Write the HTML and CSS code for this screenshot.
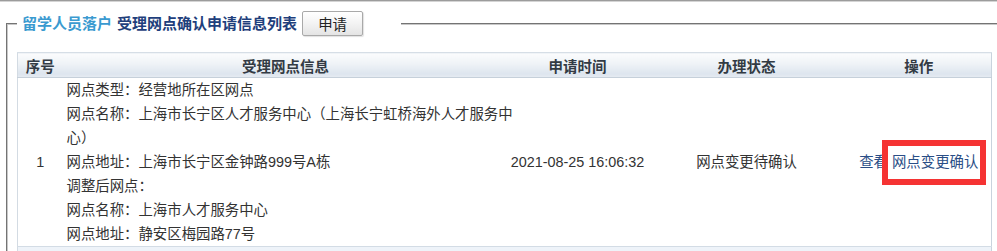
FILE: index.html
```html
<!DOCTYPE html>
<html lang="zh-CN">
<head>
<meta charset="utf-8">
<title>受理网点确认申请信息列表</title>
<link rel="stylesheet" href="styles.css">
</head>
<body>
<div class="topline"></div>
<fieldset class="panel">
  <legend class="panel-title">
    <span class="title-cat">留学人员落户</span>
    <span class="title-main">受理网点确认申请信息列表</span>
    <button class="btn" type="button">申请</button>
  </legend>
  <table class="grid">
    <colgroup>
      <col class="c-no">
      <col class="c-info">
      <col class="c-time">
      <col class="c-state">
      <col class="c-op">
    </colgroup>
    <thead>
      <tr>
        <th>序号</th>
        <th>受理网点信息</th>
        <th>申请时间</th>
        <th>办理状态</th>
        <th>操作</th>
      </tr>
    </thead>
    <tbody>
      <tr class="row">
        <td class="center">1</td>
        <td class="info">
          <div class="line">网点类型：经营地所在区网点</div>
          <div class="line">网点名称：上海市长宁区人才服务中心（上海长宁虹桥海外人才服务中心）</div>
          <div class="line">网点地址：上海市长宁区金钟路999号A栋</div>
          <div class="line">调整后网点：</div>
          <div class="line">网点名称：上海市人才服务中心</div>
          <div class="line">网点地址：静安区梅园路77号</div>
        </td>
        <td class="center">2021-08-25 16:06:32</td>
        <td class="center">网点变更待确认</td>
        <td class="center ops"><a class="link" href="#">查看</a> <a class="link marked" href="#">网点变更确认</a></td>
      </tr>
      <tr class="row-next">
        <td colspan="5"></td>
      </tr>
    </tbody>
  </table>
</fieldset>
</body>
</html>
```

FILE: styles.css
```css
html, body {
  margin: 0;
  padding: 0;
  overflow: hidden;
  background: #fff;
}

body {
  font-family: "Liberation Sans", "Noto Sans CJK SC", sans-serif;
  font-size: 14.4px;
  color: #333;
}

.topline {
  height: 1px;
  background: #9c9c9c;
  border-bottom: 1px solid #d4d4d4;
}

.panel {
  margin: 9px 0 0 6px;
  padding: 16px 0 0 9px;
  width: 1010px;
  box-sizing: border-box;
  border: 2px groove #c8c8c8;
  border-right: none;
}

.panel-title {
  display: flex;
  align-items: center;
  padding: 0 5px;
  font-size: 15px;
  font-weight: bold;
  line-height: 20px;
}

.title-cat {
  color: #3a9ad0;
  margin-right: 5px;
}

.title-main {
  color: #1f3f7c;
}

.btn {
  margin-left: 5px;
  margin-right: 33px;
  width: 61px;
  height: 25px;
  padding: 0;
  font-family: "Liberation Sans", "Noto Sans CJK SC", sans-serif;
  font-size: 14.4px;
  font-weight: normal;
  color: #222;
  border: 1px solid #a9a9a9;
  border-radius: 2px;
  background: linear-gradient(#ffffff, #f3f3f3 50%, #e4e4e4);
  box-shadow: 1px 1px 1px rgba(0, 0, 0, 0.12);
}

.grid {
  width: 974px;
  table-layout: fixed;
  border-collapse: collapse;
  border-left: 1px solid #d3dbe3;
  border-right: 1px solid #c9d3dd;
}

.c-no { width: 45px; }
.c-info { width: 446px; }
.c-time { width: 138px; }
.c-state { width: 200px; }
.c-op { width: 145px; }

.grid th {
  height: 24px;
  padding: 0;
  font-size: 14.5px;
  font-weight: bold;
  color: #333b44;
  text-align: center;
  border-top: 1px solid #d6dee6;
  border-bottom: 1px solid #c6d0da;
  background: linear-gradient(#fbfcfd, #eef2f6 45%, #dde5ee 85%, #e6ecf2);
}

.grid td {
  padding: 0;
  line-height: 24px;
  vertical-align: middle;
}

.row td {
  border-bottom: 1px solid #d3dce5;
  background: #fff;
}

.center {
  text-align: center;
}

.info {
  padding: 0 0 0 4px !important;
  text-align: left;
}

.line {
  margin-right: -12px;
}

.link {
  color: #2a4e86;
  text-decoration: none;
}

.marked {
  position: relative;
  display: inline-block;
}

.marked::after {
  content: "";
  position: absolute;
  left: -10px;
  right: -8px;
  top: -10px;
  bottom: -11px;
  border: 6px solid #f53333;
}

.row-next td {
  height: 20px;
  background: #eef3f9;
}
```
